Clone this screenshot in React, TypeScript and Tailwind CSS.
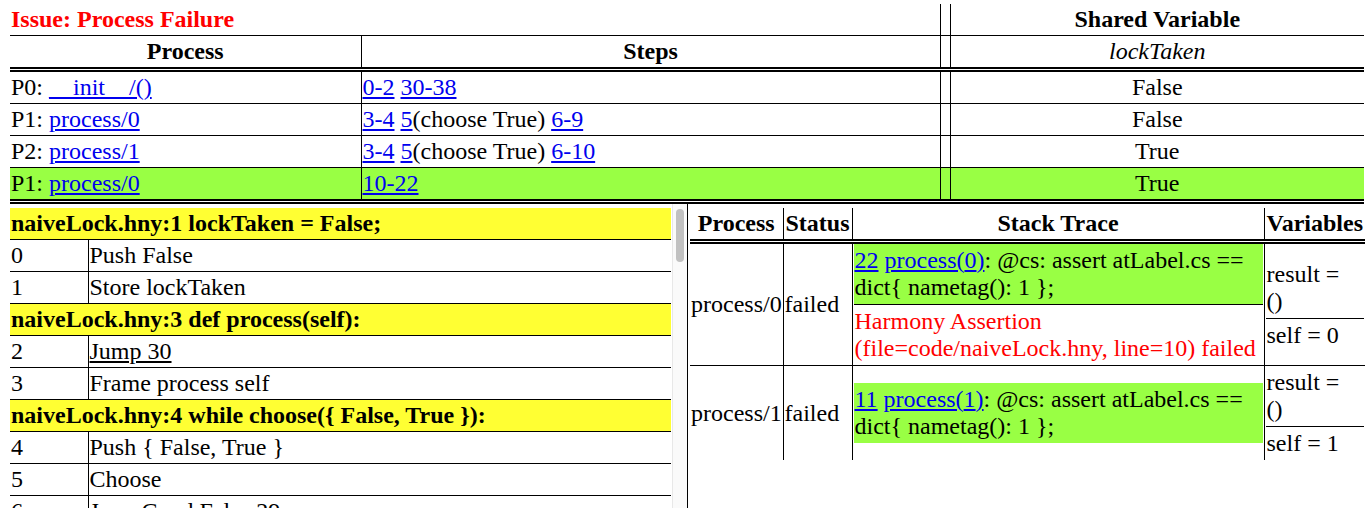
import type { ReactNode } from 'react';

const green = 'bg-[#99ff44]';
const link = 'text-[#0000ee] underline';

type CodeRow = { hdr?: string; pc?: number; op?: string; jump?: boolean };

const code: CodeRow[] = [
  { hdr: 'naiveLock.hny:1 lockTaken = False;' },
  { pc: 0, op: 'Push False' },
  { pc: 1, op: 'Store lockTaken' },
  { hdr: 'naiveLock.hny:3 def process(self):' },
  { pc: 2, op: 'Jump 30', jump: true },
  { pc: 3, op: 'Frame process self' },
  { hdr: 'naiveLock.hny:4 while choose({ False, True }):' },
  { pc: 4, op: 'Push { False, True }' },
  { pc: 5, op: 'Choose' },
  { pc: 6, op: 'JumpCond False 29', jump: true },
  { hdr: 'naiveLock.hny:6 await not lockTaken;' },
  { pc: 7, op: 'Load lockTaken' },
  { pc: 8, op: 'JumpCond True 7', jump: true },
  { hdr: 'naiveLock.hny:7 lockTaken = True;' },
  { pc: 9, op: 'Push True' },
  { pc: 10, op: 'Store lockTaken' },
  { hdr: 'naiveLock.hny:10 @cs: assert atLabel.cs == dict{ nametag(): 1 };' },
  { pc: 11, op: 'AtomicInc(lazy)' },
  { pc: 12, op: 'ReadonlyInc' },
  { pc: 13, op: 'Push PC(11)' },
  { pc: 14, op: '1-ary atLabel' },
  { pc: 15, op: 'Push {:}' },
  { pc: 16, op: 'Push ()' },
  { pc: 17, op: '1-ary nametag' },
  { pc: 18, op: 'Push 1' },
  { pc: 19, op: '3-ary DictAdd' },
  { pc: 20, op: '2-ary ==' },
  { pc: 21, op: 'ReadonlyDec' },
  { pc: 22, op: 'Assert' },
  { pc: 23, op: 'AtomicDec' },
  { hdr: 'naiveLock.hny:13 lockTaken = False;' },
  { pc: 24, op: 'Push False' },
  { pc: 25, op: 'Store lockTaken' },
  { pc: 26, op: 'Continue' },
  { hdr: 'naiveLock.hny:4 while choose({ False, True }):' },
  { pc: 27, op: 'Jump 4', jump: true },
  { hdr: 'naiveLock.hny:3 def process(self):' },
  { pc: 28, op: 'DelVar self' },
  { pc: 29, op: 'Return' },
  { hdr: 'naiveLock.hny:15 spawn process(0);' },
  { pc: 30, op: 'Push PC(3)' },
  { pc: 31, op: 'Push 0' },
  { pc: 32, op: 'Push ()' },
  { pc: 33, op: 'Spawn' },
  { hdr: 'naiveLock.hny:16 spawn process(1);' },
  { pc: 34, op: 'Push PC(3)' },
  { pc: 35, op: 'Push 1' },
  { pc: 36, op: 'Push ()' },
  { pc: 37, op: 'Spawn' },
  { pc: 38, op: 'Return' },
];

type Turn = { who: string; fn: string; steps: ReactNode; value: string; hot?: boolean };

const turns: Turn[] = [
  {
    who: 'P0',
    fn: '__init__/()',
    steps: (
      <>
        <a className={link}>0-2</a> <a className={link}>30-38</a>
      </>
    ),
    value: 'False',
  },
  {
    who: 'P1',
    fn: 'process/0',
    steps: (
      <>
        <a className={link}>3-4</a> <a className={link}>5</a>(choose True) <a className={link}>6-9</a>
      </>
    ),
    value: 'False',
  },
  {
    who: 'P2',
    fn: 'process/1',
    steps: (
      <>
        <a className={link}>3-4</a> <a className={link}>5</a>(choose True) <a className={link}>6-10</a>
      </>
    ),
    value: 'True',
  },
  {
    who: 'P1',
    fn: 'process/0',
    steps: <a className={link}>10-22</a>,
    value: 'True',
    hot: true,
  },
];

const Vars = ({ self }: { self: number }) => (
  <table className="w-full border-collapse">
    <tbody>
      <tr>
        <td className="px-px py-[3px] border-b border-black">
          result =<br />()
        </td>
      </tr>
      <tr>
        <td className="px-px py-[3px]">self = {self}</td>
      </tr>
    </tbody>
  </table>
);

const Frame = ({ pc, arg }: { pc: number; arg: number }) => (
  <td className={`${green} px-px py-[3px]`}>
    <a className={link}>{pc}</a> <a className={link}>process({arg})</a>: @cs: assert atLabel.cs == dict{'{'} nametag(): 1 {'}'};
  </td>
);

export default function App() {
  return (
    <div className="h-screen overflow-hidden bg-white text-black [font-family:Liberation_Serif,Times_New_Roman,serif] text-[24px] leading-[27px] pt-[4px] pl-[10px] pr-[6px] flex flex-col">
      <table className="w-full table-fixed border-collapse shrink-0">
        <colgroup>
          <col className="w-[351px]" />
          <col className="w-[579px]" />
          <col className="w-[10px]" />
          <col />
        </colgroup>
        <thead>
          <tr>
            <th colSpan={2} className="text-left font-bold text-[#ff0000] px-px py-[2px] border-b border-black">
              Issue: Process Failure
            </th>
            <th className="border-x border-b border-black" />
            <th className="font-bold px-px py-[2px] border-b border-black">Shared Variable</th>
          </tr>
          <tr>
            <th className="font-bold px-px py-[2px] border-b-[5px] border-double border-black">Process</th>
            <th className="font-bold px-px py-[2px] border-l border-b-[5px] border-double border-black">Steps</th>
            <th className="border-x border-b-[5px] border-double border-black" />
            <th className="italic font-normal px-px py-[2px] border-b-[5px] border-double border-black">lockTaken</th>
          </tr>
        </thead>
        <tbody>
          {turns.map((t, i) => (
            <tr key={i} className={t.hot ? green : ''}>
              <td className={`px-px py-[2px] whitespace-nowrap ${t.hot ? '' : 'border-b border-black'}`}>
                {t.who}: <a className={link}>{t.fn}</a>
              </td>
              <td className={`px-px py-[2px] whitespace-nowrap border-l border-black ${t.hot ? '' : 'border-b'}`}>
                {t.steps}
              </td>
              <td className={`border-x border-black ${t.hot ? '' : 'border-b'}`} />
              <td className={`px-px py-[2px] text-center ${t.hot ? '' : 'border-b border-black'}`}>{t.value}</td>
            </tr>
          ))}
        </tbody>
      </table>

      <div className="flex flex-1 min-h-0 border-t-[5px] border-double border-black">
        <div className="w-[678px] shrink-0 border-r border-black flex">
          <div className="flex-1 min-w-0 overflow-hidden pt-[4px] pr-px">
            <table className="w-full table-fixed border-collapse">
              <colgroup>
                <col className="w-[78px]" />
                <col />
              </colgroup>
              <tbody>
                {code.map((r, i) =>
                  r.hdr ? (
                    <tr key={i} className="bg-[#ffff33]">
                      <td colSpan={2} className="font-bold px-px py-[2px] border-b border-black whitespace-nowrap overflow-hidden">
                        {r.hdr}
                      </td>
                    </tr>
                  ) : (
                    <tr key={i}>
                      <td className="px-px py-[2px] border-b border-black">{r.pc}</td>
                      <td className="px-px py-[2px] border-b border-l border-black whitespace-nowrap">
                        {r.jump ? <a className="underline">{r.op}</a> : r.op}
                      </td>
                    </tr>
                  ),
                )}
              </tbody>
            </table>
          </div>
          {/* scrollbar */}
          <div className="w-[15px] shrink-0 bg-[#fafafa] border-l border-[#e8e8e8] pt-[5px] px-[3px]">
            <div className="h-[53px] rounded-full bg-[#c1c1c1]" />
          </div>
        </div>

        <div className="flex-1 min-w-0 pl-[2px] pt-[4px]">
          <table className="w-[675px] table-fixed border-collapse">
            <colgroup>
              <col className="w-[93px]" />
              <col className="w-[69px]" />
              <col className="w-[412px]" />
              <col className="w-[101px]" />
            </colgroup>
            <thead>
              <tr>
                <th className="font-bold px-px py-[2px] whitespace-nowrap border-b-[5px] border-double border-black">Process</th>
                <th className="font-bold px-px py-[2px] whitespace-nowrap border-l border-b-[5px] border-double border-black">Status</th>
                <th className="font-bold px-px py-[2px] whitespace-nowrap border-l border-b-[5px] border-double border-black">Stack Trace</th>
                <th className="font-bold px-px py-[2px] whitespace-nowrap border-l border-b-[5px] border-double border-black">Variables</th>
              </tr>
            </thead>
            <tbody>
              <tr>
                <td className="px-px py-[2px] whitespace-nowrap align-middle border-b border-black">process/0</td>
                <td className="px-px py-[2px] whitespace-nowrap align-middle border-l border-b border-black">failed</td>
                <td className="px-px py-0 align-middle border-l border-b border-black">
                  <table className="w-full border-collapse">
                    <tbody>
                      <tr className="border-b border-black">
                        <Frame pc={22} arg={0} />
                      </tr>
                      <tr>
                        <td className="px-px py-[3px] text-[#ff0000]">
                          Harmony Assertion (file=code/naiveLock.hny, line=10) failed
                        </td>
                      </tr>
                    </tbody>
                  </table>
                </td>
                <td className="px-px py-0 align-middle border-l border-b border-black">
                  <Vars self={0} />
                </td>
              </tr>
              <tr>
                <td className="px-px py-[2px] whitespace-nowrap align-middle">process/1</td>
                <td className="px-px py-[2px] whitespace-nowrap align-middle border-l border-black">failed</td>
                <td className="px-px py-0 align-middle border-l border-black">
                  <table className="w-full border-collapse">
                    <tbody>
                      <tr>
                        <Frame pc={11} arg={1} />
                      </tr>
                    </tbody>
                  </table>
                </td>
                <td className="px-px py-0 align-middle border-l border-black">
                  <Vars self={1} />
                </td>
              </tr>
            </tbody>
          </table>
        </div>
      </div>
    </div>
  );
}
